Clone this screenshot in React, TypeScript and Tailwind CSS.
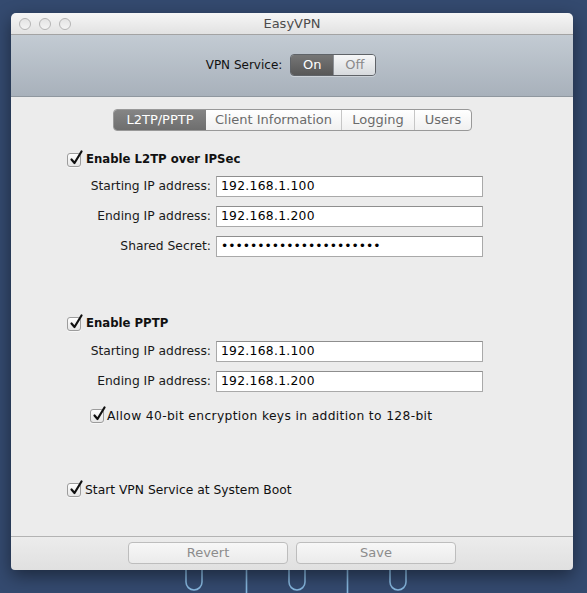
import React from 'react';

const font = { fontFamily: '"DejaVu Sans", "Liberation Sans", sans-serif' };

function CheckBox() {
  return (
    <span className="relative inline-block w-[14px] h-[14px] shrink-0 rounded-[3px] border border-[#9c9c9c] bg-gradient-to-b from-[#ffffff] to-[#e6e6e6] shadow-[0_1px_0_rgba(255,255,255,0.6)]">
      <svg className="absolute left-[1px] top-[-4px]" width="15" height="16" viewBox="0 0 15 16">
        <path d="M2.5 9.5 L5.5 13 L12.5 1.5" fill="none" stroke="#111" strokeWidth="2.2" strokeLinecap="round" strokeLinejoin="round" />
      </svg>
    </span>
  );
}

function Field({ label, value, secret }: { label: string; value: string; secret?: boolean }) {
  return (
    <div className="flex items-center h-[21px]">
      <div className="w-[151px] text-right pr-[5px] text-[#1a1a1a]">{label}</div>
      <div className="w-[267px] h-[21px] border border-[#a9a9a9] border-t-[#8e8e8e] bg-white flex items-center pl-[4px] text-black">
        {secret ? <span>{value}</span> : <span className="tracking-[0.3px]">{value}</span>}
      </div>
    </div>
  );
}

function Clip({ x }: { x: number }) {
  return <path d={`M${x} 0 V13 a8 8 0 0 0 16 0 V0`} fill="none" stroke="#86b7df" strokeWidth="1.6" />;
}

export default function App() {
  const tabs = ['L2TP/PPTP', 'Client Information', 'Logging', 'Users'];
  const tabWidths = ['w-[92px]', 'w-[135px]', 'w-[73px]', 'w-[57px]'];

  return (
    <div className="relative w-[587px] h-[593px] overflow-hidden bg-[#344a6f] pt-[13px] pl-[11px] text-[12.3px]" style={font}>
      <svg className="absolute left-0 top-[569px]" width="587" height="24" viewBox="0 0 587 24">
        <Clip x={186} />
        <line x1="246.5" y1="0" x2="246.5" y2="24" stroke="#86b7df" strokeWidth="1.6" />
        <Clip x={289} />
        <line x1="347.5" y1="0" x2="347.5" y2="24" stroke="#86b7df" strokeWidth="1.6" />
        <Clip x={390} />
      </svg>

      <div className="relative w-[562px] h-[557px] flex flex-col rounded-t-[5px] rounded-b-[4px] overflow-hidden shadow-[0_6px_18px_rgba(0,0,0,0.45)]">
        {/* title bar */}
        <div className="relative h-[22px] shrink-0 flex items-center justify-center bg-gradient-to-b from-[#f6f6f6] to-[#e2e2e2] border-b border-[#a3a3a3]">
          <div className="absolute left-[8px] top-[5px] flex gap-[8px]">
            <span className="w-[12px] h-[12px] rounded-full border border-[#b4b4b4] bg-gradient-to-b from-[#e4e4e4] to-[#f4f4f4]" />
            <span className="w-[12px] h-[12px] rounded-full border border-[#b4b4b4] bg-gradient-to-b from-[#e4e4e4] to-[#f4f4f4]" />
            <span className="w-[12px] h-[12px] rounded-full border border-[#b4b4b4] bg-gradient-to-b from-[#e4e4e4] to-[#f4f4f4]" />
          </div>
          <span className="text-[13px] text-[#4c4c4c]">EasyVPN</span>
        </div>

        {/* toolbar */}
        <div className="h-[62px] shrink-0 flex items-center justify-center pb-[1px] bg-gradient-to-b from-[#c3cbd3] to-[#a8b1bb] border-b border-[#8f979f]">
          <span className="text-[12px] text-[#111] mr-[8px] ml-[-2px]">VPN Service:</span>
          <div className="flex h-[22px] rounded-[4px] border border-[#5f6368] overflow-hidden shadow-[0_1px_0_rgba(255,255,255,0.35)]">
            <div className="w-[42px] flex items-center justify-center bg-gradient-to-b from-[#767676] to-[#585858] text-white text-[13px]">On</div>
            <div className="w-[42px] flex items-center justify-center bg-gradient-to-b from-[#f6f7f8] to-[#d7dadd] text-[#8a8a8a] text-[13px] border-l border-[#8c9096]">Off</div>
          </div>
        </div>

        {/* content */}
        <div className="flex-1 bg-[#ececec] flex flex-col">
          <div className="flex justify-center pt-[12px] pl-[1px]">
            <div className="flex h-[22px] rounded-[4px] border border-[#999] overflow-hidden bg-gradient-to-b from-[#ffffff] to-[#f0f0f0]">
              {tabs.map((t, i) => (
                <div
                  key={t}
                  className={`${tabWidths[i]} flex items-center justify-center text-[13px] ${
                    i === 0
                      ? 'bg-gradient-to-b from-[#858585] to-[#6e6e6e] text-white'
                      : 'text-[#6a6a6a]'
                  } ${i > 1 ? 'border-l border-[#c6c6c6]' : ''}`}
                >
                  {t}
                </div>
              ))}
            </div>
          </div>

          <div className="pl-[56px] pt-[21px] flex flex-col">
            <div className="flex items-center gap-[5px] h-[16px]">
              <CheckBox />
              <span className="font-bold text-[11.7px] text-[#111]">Enable L2TP over IPSec</span>
            </div>
            <div className="flex flex-col gap-[9px] mt-[8px] ml-[-2px]">
              <Field label="Starting IP address:" value="192.168.1.100" />
              <Field label="Ending IP address:" value="192.168.1.200" />
              <Field label="Shared Secret:" value="••••••••••••••••••••••" secret />
            </div>

            <div className="flex items-center gap-[5px] h-[16px] mt-[59px]">
              <CheckBox />
              <span className="font-bold text-[11.7px] text-[#111]">Enable PPTP</span>
            </div>
            <div className="flex flex-col gap-[9px] mt-[9px] ml-[-2px]">
              <Field label="Starting IP address:" value="192.168.1.100" />
              <Field label="Ending IP address:" value="192.168.1.200" />
            </div>

            <div className="flex items-center gap-[3px] h-[16px] mt-[16px] ml-[23px]">
              <CheckBox />
              <span className="text-[#111] tracking-[0.35px]">Allow 40-bit encryption keys in addition to 128-bit</span>
            </div>

            <div className="flex items-center gap-[4px] h-[16px] mt-[58px]">
              <CheckBox />
              <span className="text-[#111]">Start VPN Service at System Boot</span>
            </div>
          </div>
        </div>

        {/* bottom bar */}
        <div className="h-[34px] shrink-0 border-t border-[#b3b3b3] bg-gradient-to-b from-[#ececec] to-[#e0e0e0] flex justify-center gap-[8px] pt-[5px]">
          <div className="w-[160px] h-[22px] rounded-[4px] border border-[#bdbdbd] bg-gradient-to-b from-[#f7f7f7] to-[#ebebeb] flex items-center justify-center text-[#8c8c8c] text-[13px]">Revert</div>
          <div className="w-[160px] h-[22px] rounded-[4px] border border-[#bdbdbd] bg-gradient-to-b from-[#f7f7f7] to-[#ebebeb] flex items-center justify-center text-[#8c8c8c] text-[13px]">Save</div>
        </div>
      </div>
    </div>
  );
}
